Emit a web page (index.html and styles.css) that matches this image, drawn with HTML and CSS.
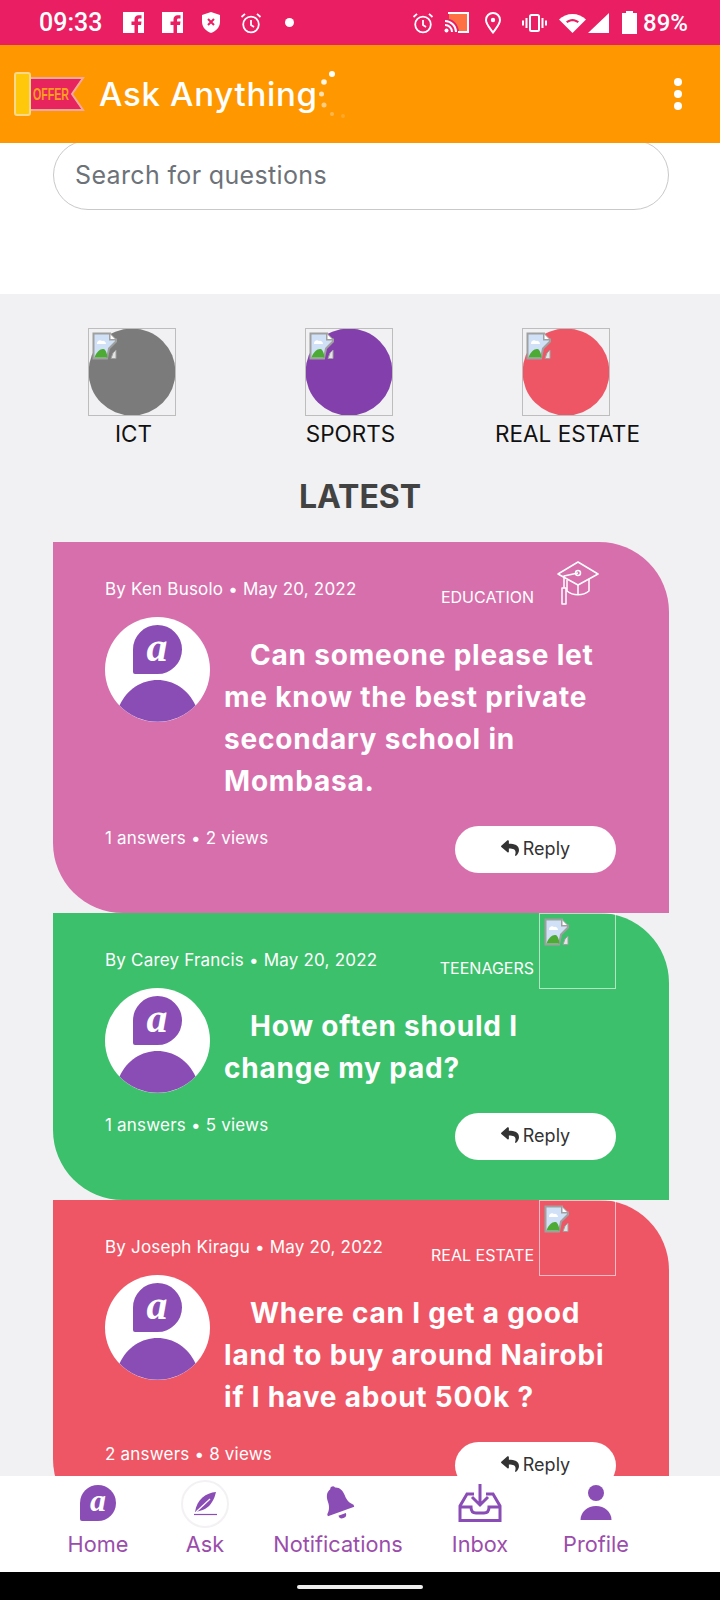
FILE: index.html
```html
<!DOCTYPE html>
<html lang="en">
<head>
    <meta charset="UTF-8">
    <meta name="viewport" content="width=device-width, initial-scale=1.0">
    <title>Ask Anything</title>
    <link rel="stylesheet" href="styles.css">
</head>
<body>
    <svg class="defs" width="0" height="0">
        <symbol id="avatar" viewBox="0 0 105 105">
            <circle cx="52.5" cy="52.5" r="52.5" fill="#fff"/>
            <path d="M28 32.500a24.500 24.500 0 1 1 24.500 24.500H30a2 2 0 0 1-2-2z" fill="#8a4db5"/>
            <path d="M14.500 88.500C22 72 37 63 52.500 63S83 72 90.500 88.500A52.500 52.500 0 0 1 14.500 88.500z" fill="#8a4db5"/>
        </symbol>
        <symbol id="broken" viewBox="0 0 28 28">
            <path d="M1.500 1.500H18v6h6v2l-7 7-2 10H1.500z" fill="#cfe0f7" stroke="#a0a0a0" stroke-width="2"/>
            <path d="M18 1.500l6 6h-6z" fill="#fff" stroke="#a0a0a0"/>
            <path d="M5 11a3 3 0 0 1 5-2 3 3 0 0 1 4 3H5z" fill="#fff"/>
            <path d="M2.500 25.500c2-6 6-9 9-8.500 2 .4 3.500 4 4 8.500z" fill="#4dab35"/>
            <path d="M21 21l3-3v8.500h-5z" fill="#e4e4e4" stroke="#a0a0a0"/>
        </symbol>
        <symbol id="reply" viewBox="0 0 512 512">
            <path fill="currentColor" d="M8.309 189.836L184.313 37.851C199.719 24.546 224 35.347 224 56.015v80.053c160.629 1.839 288 34.032 288 186.258 0 61.441-39.581 122.309-83.333 154.132-13.653 9.931-33.111-2.533-28.077-18.631 45.344-145.012-21.507-183.51-176.59-185.742V360c0 20.7-24.3 31.453-39.687 18.164l-176.004-152c-11.071-9.562-11.086-26.753 0-36.328z"/>
        </symbol>
        <symbol id="fb" viewBox="0 0 21 21">
            <path fill="#fff" d="M0 0h21v21h-6v-8h3l.5-3.500H15V8c0-1 .5-1.500 1.500-1.500h2V3.200h-3C13 3.200 11.500 5 11.500 7.500v2h-3V13h3v8H0z"/>
        </symbol>
        <symbol id="alarm" viewBox="0 0 22 22">
            <g fill="none" stroke="#fff" stroke-width="1.800">
                <circle cx="11" cy="12.500" r="7.800"/>
                <path d="M11 8v5l3 2M1.500 5 5 1.800M20.500 5 17 1.800"/>
            </g>
        </symbol>
    </svg>

    <div class="screen">
        <div class="status-bar">
            <span class="clock">09:33</span>
            <svg class="st-fb first" width="21" height="21"><use href="#fb"/></svg>
            <svg class="st-fb" width="21" height="21"><use href="#fb"/></svg>
            <svg class="st-shield" width="18" height="21" viewBox="0 0 18 21">
                <path fill="#fff" d="M9 0l9 3v7c0 5-4 9-9 11-5-2-9-6-9-11V3z"/>
                <path stroke="#e91e63" stroke-width="2" d="M6 7l6 6M12 7l-6 6"/>
            </svg>
            <svg class="st-alarm" width="22" height="22"><use href="#alarm"/></svg>
            <span class="st-dot"></span>
            <span class="spacer"></span>
            <svg width="22" height="22"><use href="#alarm"/></svg>
            <svg class="st-cast" width="25" height="21" viewBox="0 0 25 21">
                <path fill="none" stroke="#fff" stroke-width="2" d="M4 1h20v19H14"/>
                <path fill="#ff7043" d="M5 2h18v17H15C14 12 10 8 5 7z"/>
                <path fill="none" stroke="#fff" stroke-width="2" d="M1 9a11 11 0 0 1 11 11M1 13a7 7 0 0 1 7 7"/>
                <circle cx="2.500" cy="18.500" r="2" fill="#fff"/>
            </svg>
            <svg class="st-pin" width="16" height="22" viewBox="0 0 16 22">
                <path fill="none" stroke="#fff" stroke-width="2" d="M8 20.500C4 15 1 12 1 8a7 7 0 0 1 14 0c0 4-3 7-7 12.500z"/>
                <circle cx="8" cy="8" r="2.200" fill="#fff"/>
            </svg>
            <svg class="st-vib" width="25" height="20" viewBox="0 0 25 20">
                <rect x="8" y="2" width="9" height="16" rx="1.500" fill="none" stroke="#fff" stroke-width="2"/>
                <path stroke="#fff" stroke-width="2" d="M4.500 5v10M20.500 5v10M1 7.500v5M24 7.500v5"/>
            </svg>
            <svg class="st-wifi" width="27" height="20" viewBox="0 0 27 20">
                <path fill="#fff" d="M0 6.500C7-1 20-1 27 6.500L13.500 20z"/>
                <path fill="#e91e63" d="M7 8.500c4-3.500 9-3.500 13 0l-1.500 1.500c-3-2.500-7-2.500-10 0z"/>
            </svg>
            <svg class="st-signal" width="21" height="20" viewBox="0 0 21 20"><path fill="#fff" d="M21 0v20H0z"/></svg>
            <svg class="st-batt" width="15" height="23" viewBox="0 0 15 23"><path fill="#fff" d="M4 0h7v2h4v21H0V2h4z"/></svg>
            <span class="st-pct">89%</span>
        </div>

        <header class="app-bar">
            <svg class="logo" width="72" height="44" viewBox="0 0 72 44">
                <path d="M16 6H70L59 22 70 38H16z" fill="#e8245f" stroke="#f7a9a0" stroke-width="2"/>
                <rect x="2" y="1" width="15" height="42" rx="2" fill="#ffc80a" stroke="#fbd88a" stroke-width="2"/>
                <text x="20" y="28" textLength="36" lengthAdjust="spacingAndGlyphs" class="logo-text">OFFER</text>
            </svg>
            <h1 class="app-title">Ask Anything</h1>
            <svg class="spinner" width="32" height="52" viewBox="0 0 32 52">
                <circle cx="13" cy="4" r="3" fill="#fff"/>
                <circle cx="5" cy="12" r="2.800" fill="#fff" opacity=".9"/>
                <circle cx="2.500" cy="24" r="2.500" fill="#fff" opacity=".7"/>
                <circle cx="5" cy="35" r="2.500" fill="#fff" opacity=".5"/>
                <circle cx="13" cy="44" r="2" fill="#fff" opacity=".3"/>
                <circle cx="24" cy="46" r="2" fill="#fff" opacity=".15"/>
            </svg>
            <div class="kebab"><span></span><span></span><span></span></div>
        </header>

        <main class="content">
            <section class="search-wrap">
                <div class="search-box">Search for questions</div>
            </section>

            <section class="latest-wrap">
                <div class="categories">
                    <div class="category cat-grey">
                        <svg width="88" height="88" viewBox="0 0 88 88">
                            <circle cx="44" cy="44" r="43.500" fill="currentColor"/>
                            <rect x=".5" y=".5" width="87" height="87" fill="none" stroke="#bdbdbd"/>
                            <use href="#broken" x="4" y="4" width="28" height="28"/>
                        </svg>
                        <span>ICT</span>
                    </div>
                    <div class="category cat-purple">
                        <svg width="88" height="88" viewBox="0 0 88 88">
                            <circle cx="44" cy="44" r="43.500" fill="currentColor"/>
                            <rect x=".5" y=".5" width="87" height="87" fill="none" stroke="#bdbdbd"/>
                            <use href="#broken" x="4" y="4" width="28" height="28"/>
                        </svg>
                        <span>SPORTS</span>
                    </div>
                    <div class="category cat-red">
                        <svg width="88" height="88" viewBox="0 0 88 88">
                            <circle cx="44" cy="44" r="43.500" fill="currentColor"/>
                            <rect x=".5" y=".5" width="87" height="87" fill="none" stroke="#bdbdbd"/>
                            <use href="#broken" x="4" y="4" width="28" height="28"/>
                        </svg>
                        <span>REAL ESTATE</span>
                    </div>
                </div>

                <h2 class="latest-title">LATEST</h2>

                <article class="card card-pink">
                    <div class="card-head">
                        <span class="meta">By Ken Busolo • May 20, 2022</span>
                        <span class="tag">EDUCATION</span>
                        <div class="tag-slot">
                            <svg width="42" height="44" viewBox="0 0 42 44" fill="none" stroke="#fff" stroke-width="1.500" stroke-linejoin="round">
                                <path d="M21 1 41 13 21 24 1 13z"/>
                                <path d="M10 19v11c6 5 16 5 22 0V18"/>
                                <path d="M21 24v10M21 12 7 15v12"/>
                                <circle cx="21" cy="12" r="2.500"/>
                                <path d="M5 27h4v16H5z"/>
                            </svg>
                        </div>
                    </div>
                    <div class="card-body">
                        <svg class="avatar" width="105" height="105" viewBox="0 0 105 105"><use href="#avatar"/><text x="52" y="44" text-anchor="middle" class="avatar-a">a</text></svg>
                        <p class="question">Can someone please let me know the best private secondary school in Mombasa.</p>
                    </div>
                    <div class="card-foot">
                        <span class="stats">1 answers • 2 views</span>
                        <div class="reply"><svg width="18" height="18"><use href="#reply"/></svg>Reply</div>
                    </div>
                </article>

                <article class="card card-green">
                    <div class="card-head">
                        <span class="meta">By Carey Francis • May 20, 2022</span>
                        <span class="tag">TEENAGERS</span>
                        <div class="tag-slot tag-broken">
                            <svg width="28" height="28"><use href="#broken"/></svg>
                        </div>
                    </div>
                    <div class="card-body">
                        <svg class="avatar" width="105" height="105" viewBox="0 0 105 105"><use href="#avatar"/><text x="52" y="44" text-anchor="middle" class="avatar-a">a</text></svg>
                        <p class="question">How often should I change my pad?</p>
                    </div>
                    <div class="card-foot">
                        <span class="stats">1 answers • 5 views</span>
                        <div class="reply"><svg width="18" height="18"><use href="#reply"/></svg>Reply</div>
                    </div>
                </article>

                <article class="card card-red">
                    <div class="card-head">
                        <span class="meta">By Joseph Kiragu • May 20, 2022</span>
                        <span class="tag">REAL ESTATE</span>
                        <div class="tag-slot tag-broken">
                            <svg width="28" height="28"><use href="#broken"/></svg>
                        </div>
                    </div>
                    <div class="card-body">
                        <svg class="avatar" width="105" height="105" viewBox="0 0 105 105"><use href="#avatar"/><text x="52" y="44" text-anchor="middle" class="avatar-a">a</text></svg>
                        <p class="question">Where can I get a good land to buy around Nairobi if I have about 500k ?</p>
                    </div>
                    <div class="card-foot">
                        <span class="stats">2 answers • 8 views</span>
                        <div class="reply"><svg width="18" height="18"><use href="#reply"/></svg>Reply</div>
                    </div>
                </article>
            </section>
        </main>

        <nav class="bottom-nav">
            <div class="nav-item">
                <svg width="36" height="36" viewBox="0 0 36 36">
                    <path d="M0 18a18 18 0 1 1 18 18H2a2 2 0 0 1-2-2z" fill="#8a4db5"/>
                    <text x="18" y="26" text-anchor="middle" class="bubble-a">a</text>
                </svg>
                <span>Home</span>
            </div>
            <div class="nav-item">
                <div class="ask-circle">
                    <svg width="26" height="26" viewBox="0 0 26 26">
                        <path fill="#8a4db5" d="M24 1C14 2 5 8 3 21c7-1 14-4 17-10 2-3 3-6 4-10z"/>
                        <path stroke="#fff" stroke-width="1.200" d="M4 21 18 8"/>
                        <path stroke="#8a4db5" stroke-width="1.200" d="M2 23.500h23"/>
                    </svg>
                </div>
                <span>Ask</span>
            </div>
            <div class="nav-item">
                <svg width="36" height="36" viewBox="0 0 36 36">
                    <g transform="rotate(-20 18 18)" fill="#8a4db5">
                        <circle cx="18" cy="3" r="2.500"/>
                        <path d="M18 2c6 0 9 5 9 11 0 6 2 9 5 12v2H4v-2c3-3 5-6 5-12 0-6 3-11 9-11z"/>
                        <path d="M14 30a4 4 0 0 0 8 0z"/>
                    </g>
                </svg>
                <span>Notifications</span>
            </div>
            <div class="nav-item">
                <svg width="44" height="38" viewBox="0 0 44 38" fill="none" stroke="#8a4db5" stroke-width="3">
                    <path d="M16 10H9L2 22V36.500H42V22L35 10H28"/>
                    <path d="M2 23h11c0 5 3 6 5 6h8c2 0 5-1 5-6h11"/>
                    <path d="M22 0v20M14 13l8 8 8-8"/>
                </svg>
                <span>Inbox</span>
            </div>
            <div class="nav-item">
                <svg width="36" height="36" viewBox="0 0 36 36" fill="#8a4db5">
                    <circle cx="18" cy="8" r="8"/>
                    <path d="M2.500 35c0-8 7-14 15.500-14s15.500 6 15.500 14z"/>
                </svg>
                <span>Profile</span>
            </div>
        </nav>

        <div class="gesture-bar"><span></span></div>
    </div>
</body>
</html>
```

FILE: styles.css
```css
* {
    margin: 0;
    padding: 0;
    box-sizing: border-box;
}
html, body {
    height: 100%;
    font-family: Inter, "Noto Sans", sans-serif;
}
.defs {
    display: block;
    height: 0;
}
.bubble-a {
    font: italic bold 32px "Liberation Serif", serif;
    fill: #fff;
}
.avatar-a {
    font: italic bold 42px "Liberation Serif", serif;
    fill: #fff;
}
.screen {
    width: 720px;
    height: 1600px;
    display: flex;
    flex-direction: column;
    overflow: hidden;
}

/* status bar */
.status-bar {
    height: 45px;
    flex: none;
    display: flex;
    align-items: center;
    padding: 0 32px 0 39px;
    background-color: #e91e63;
    color: #fff;
    font-family: Roboto, sans-serif;
    font-size: 24px;
    font-weight: 500;
}
.clock {
    width: 62px;
    font-size: 25px;
}
.st-fb.first {
    margin-left: 22px;
}
.st-fb {
    margin-right: 18px;
}
.st-shield {
    margin-left: 1px;
}
.st-alarm {
    margin-left: 20px;
}
.st-dot {
    width: 9px;
    height: 9px;
    border-radius: 50%;
    background-color: #fff;
    margin-left: 23px;
}
.spacer {
    flex: 1;
}
.st-cast {
    margin-left: 10px;
}
.st-pin {
    margin-left: 16px;
}
.st-vib {
    margin-left: 21px;
}
.st-wifi {
    margin-left: 12px;
}
.st-signal {
    margin-left: 2px;
}
.st-batt {
    margin-left: 13px;
}
.st-pct {
    margin-left: 6px;
}

/* app bar */
.app-bar {
    height: 98px;
    flex: none;
    position: relative;
    display: flex;
    align-items: center;
    padding: 0 38px 0 13px;
    background-color: #ff9800;
    color: #fff;
}
.logo {
    flex: none;
    overflow: visible;
}
.logo-text {
    font: bold 17px "Liberation Sans", sans-serif;
    fill: #ff9f1c;
}
.app-title {
    margin-left: 14px;
    font-size: 33px;
    font-weight: 500;
    letter-spacing: 0.7px;
    flex: 1;
}
.spinner {
    position: absolute;
    left: 319px;
    top: 25px;
}
.kebab {
    display: flex;
    flex-direction: column;
    gap: 4px;
}
.kebab span {
    width: 8px;
    height: 8px;
    border-radius: 50%;
    background-color: #fff;
}

/* scrolled content */
.content {
    flex: 1;
    min-height: 0;
    overflow: hidden;
}
.search-wrap {
    display: flow-root;
    height: 151px;
    background-color: #fff;
    padding: 0 51px 0 53px;
}
.search-box {
    height: 70px;
    margin-top: -3px;
    padding: 0 21px;
    display: flex;
    align-items: center;
    border: 1px solid #c9c9c9;
    border-radius: 35px;
    color: #6d7278;
    font-size: 25px;
    letter-spacing: 0.35px;
}
.latest-wrap {
    background-color: #f1f1f3;
    padding-top: 34px;
}
.categories {
    display: grid;
    grid-template-columns: repeat(3, 217px);
    padding-left: 23px;
}
.category {
    display: flex;
    flex-direction: column;
    align-items: center;
    color: #111;
    font-size: 22.5px;
    line-height: 36px;
}
.category svg {
    display: block;
}
.category span {
    padding-left: 4px;
}
.cat-grey svg {
    color: #7b7b7b;
}
.cat-purple svg {
    color: #8340ac;
}
.cat-red svg {
    color: #ef5665;
}
.latest-title {
    margin: 25px 0 25px;
    text-align: center;
    color: #424242;
    font-size: 32px;
    font-weight: 700;
    line-height: 40px;
}

/* question cards */
.card {
    margin: 0 51px 0 53px;
    padding: 0 53px 40px 52px;
    border-radius: 0 70px 0 70px;
    color: #fff;
}
.card-pink {
    background-color: #d76fad;
}
.card-green {
    background-color: #3cc06c;
}
.card-red {
    background-color: #ef5665;
}
.card-head {
    height: 75px;
    display: flex;
}
.meta {
    flex: 1;
    padding-top: 36px;
    font-size: 17px;
    letter-spacing: 0.2px;
    line-height: 22px;
    white-space: nowrap;
}
.tag {
    padding-top: 44px;
    margin-right: 5px;
    font-size: 16px;
    line-height: 22px;
}
.tag-slot {
    width: 77px;
    height: 76px;
    display: flex;
    justify-content: center;
    padding-top: 19px;
}
.tag-broken {
    justify-content: flex-start;
    padding: 4px;
    border: 1px solid rgba(255, 255, 255, 0.6);
}
.card-body {
    display: flex;
    gap: 14px;
}
.avatar {
    flex: none;
}
.question {
    flex: 1;
    margin: 17px 0 5px;
    text-indent: 26px;
    font-size: 28px;
    font-weight: 700;
    letter-spacing: 0.8px;
    line-height: 42px;
}
.card-foot {
    margin-top: 19px;
    display: flex;
    justify-content: space-between;
}
.stats {
    padding-top: 1px;
    font-size: 17px;
    letter-spacing: 0.2px;
    line-height: 22px;
}
.reply {
    width: 161px;
    height: 47px;
    padding-bottom: 3px;
    display: flex;
    align-items: center;
    justify-content: center;
    gap: 4px;
    border-radius: 24px;
    background-color: #fff;
    color: #333;
    font-size: 18px;
}

/* bottom nav */
.bottom-nav {
    height: 96px;
    flex: none;
    position: relative;
    display: grid;
    grid-template-columns: 104px 110px 156px 128px 104px;
    padding: 8px 0 0 46px;
    background-color: #fff;
}
.nav-item {
    display: flex;
    flex-direction: column;
    align-items: center;
    color: #9b4dab;
    font-size: 21.7px;
    white-space: nowrap;
}
.nav-item svg {
    display: block;
    height: 38px;
    overflow: visible;
}
.nav-item span {
    margin-top: 9px;
    line-height: 26px;
}
.ask-circle {
    width: 48px;
    height: 48px;
    margin: -4px 0 -6px;
    display: flex;
    align-items: center;
    justify-content: center;
    border: 2px solid #f3f1f4;
    border-radius: 50%;
}
.gesture-bar {
    height: 28px;
    flex: none;
    display: flex;
    justify-content: center;
    padding-top: 13px;
    background-color: #000;
}
.gesture-bar span {
    width: 126px;
    height: 4px;
    border-radius: 2px;
    background-color: #eee;
}
```
